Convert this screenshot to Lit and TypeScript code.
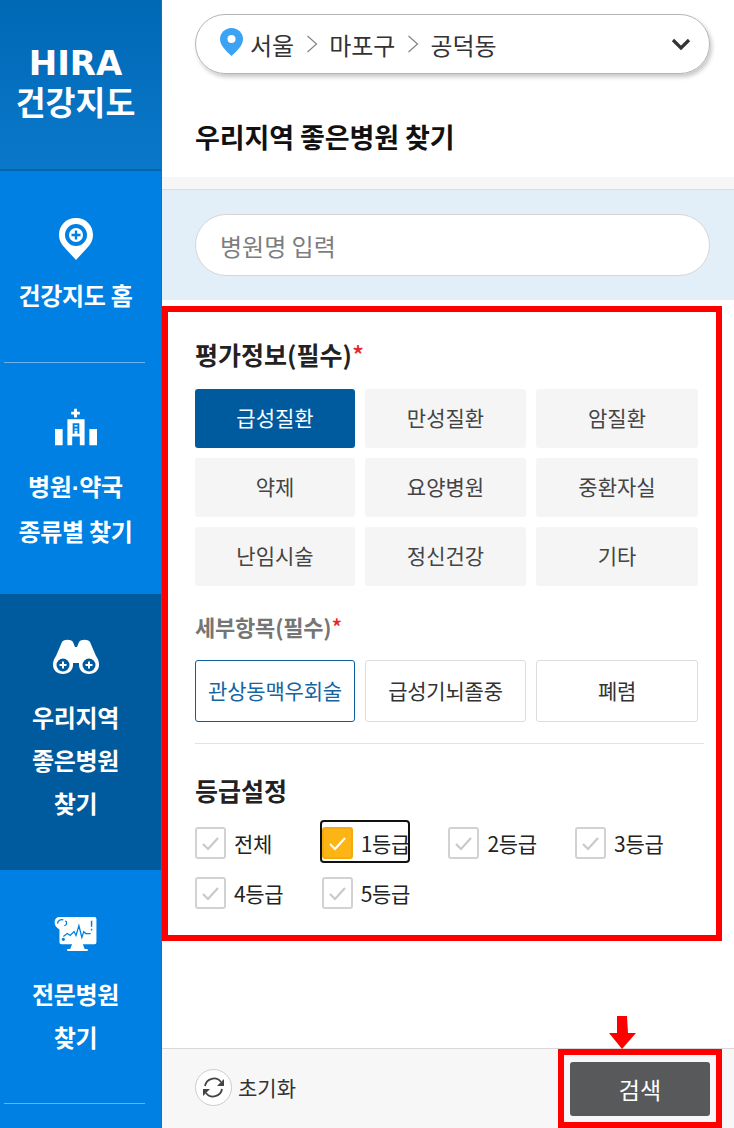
import {css, html, LitElement} from 'lit';
import {customElement} from 'lit/decorators.js';

const CHIPS = ['급성질환', '만성질환', '암질환', '약제', '요양병원', '중환자실', '난임시술', '정신건강', '기타'];
const SUBS = ['관상동맥우회술', '급성기뇌졸중', '폐렴'];
const GRADES = ['전체', '1등급', '2등급', '3등급', '4등급', '5등급'];

const homeIcon = html`<svg width="36" height="44" viewBox="0 0 36 44">
  <path fill="#fff" d="M18 1C8 1 1 8.500 1 18c0 5 2 9 5.500 12.500L18 43l11.500-12.500C33 27 35 23 35 18 35 8.500 28 1 18 1z"/>
  <circle cx="18" cy="18" r="11" fill="#0080e2"/>
  <circle cx="18" cy="18" r="7" fill="#fff"/>
  <path stroke="#0080e2" stroke-width="2.400" d="M18 13.500v9M13.500 18h9"/>
</svg>`;

const hospitalIcon = html`<svg width="42" height="38" viewBox="0 0 44 38" fill="#fff">
  <path d="M20 0h3v3h3v3h-3v3h-3V6h-3V3h3z"/>
  <path d="M13 11h18v27h-5V29h-8v9h-5z"/>
  <path d="M0 21h8v17H0zM36 21h8v17h-8z"/>
  <path fill="#0080e2" d="M18.500 15h7v11h-2v-3h-3v3h-2zm2 2v1.500h3V17zm0 3.500V22h3v-1.500z"/>
</svg>`;

const binocularIcon = html`<svg width="46" height="36" viewBox="0 0 46 36">
  <path fill="#fff" d="M9 3c2-3 9-3 11 0l2 5h2l2-5c2-3 9-3 11 0l6 14c2 3 3 5 3 9 0 5-4 9-10 9s-10-4-10-9v-2h-6v2c0 5-4 9-10 9S0 31 0 26c0-4 1-6 3-9z"/>
  <circle cx="10" cy="26" r="6.500" fill="#005a9e"/>
  <circle cx="36" cy="26" r="6.500" fill="#005a9e"/>
  <path stroke="#fff" stroke-width="2" d="M10 22.500v7M6.500 26h7M36 22.500v7M32.500 26h7"/>
</svg>`;

const monitorIcon = html`<svg width="44" height="36" viewBox="0 0 44 37">
  <path fill="#fff" d="M5 1h36a2 2 0 0 1 2 2v24a2 2 0 0 1-2 2H29l2 5h3v2H13v-2h3l2-5H7a2 2 0 0 1-2-2V14C2 12 0 10 0 6.500 0 3 2 1 5 1z"/>
  <path fill="none" stroke="#0080e2" stroke-width="1.300" d="M9 21l4-3 3 2 4-4 2 4 3-10 3 12 2-6 2 2h5"/>
  <path fill="none" stroke="#0080e2" stroke-width="1.300" d="M3 8c0-3 3-5 6-4M11 5c2 1 2 4-1 5"/>
  <circle cx="9" cy="24" r="1.600" fill="#0080e2"/>
  <path stroke="#0080e2" stroke-width="1.500" d="M38 5v6M38 13v2"/>
</svg>`;

const checkMark = html`<svg class="tick" width="19" height="15" viewBox="0 0 19 15">
  <path fill="none" stroke="currentColor" stroke-width="2.200" d="M2 8l5 5L17 2"/>
</svg>`;

@customElement('app-root')
export class AppRoot extends LitElement {
  static override styles = css`
    :host {
      display: flex;
      width: 734px;
      height: 1128px;
      overflow: hidden;
      position: relative;
      font-family: 'Noto Sans CJK KR', 'Noto Sans', sans-serif;
      color: #222;
      background: #fff;
    }

    .side {
      width: 162px;
      flex: none;
      display: flex;
      flex-direction: column;
      background: #0080e2;
      color: #fff;
      border-right: 1px solid #1a6fb5;
      box-sizing: border-box;
    }

    .logo {
      height: 171px;
      flex: none;
      box-sizing: border-box;
      background: linear-gradient(#0068b5, #0a78ca);
      border-bottom: 2px solid #0865ad;
      display: flex;
      flex-direction: column;
      align-items: center;
      padding: 46px 10px 0 0;
    }

    .logo b {
      font-family: 'DejaVu Sans', sans-serif;
      font-size: 34px;
      line-height: 34px;
      font-weight: 700;
    }

    .logo span {
      font-size: 32.500px;
      line-height: 42px;
      font-weight: 700;
    }

    .nav {
      display: flex;
      flex-direction: column;
      align-items: center;
      box-sizing: border-box;
      padding-right: 10px;
      font-size: 24px;
      font-weight: 700;
      line-height: 43px;
      letter-spacing: -0.3px;
    }

    .nav svg {
      display: block;
      flex: none;
    }

    .nav em {
      font-family: 'Liberation Sans', sans-serif;
      font-style: normal;
      font-weight: 700;
    }

    .home { height: 191px; padding-top: 46px; }
    .home svg { margin-bottom: 12px; }
    .hospital { height: 231px; padding-top: 45px; }
    .hospital svg { margin-bottom: 18px; }
    .active { height: 276px; padding-top: 45px; background: #005a9e; }
    .active svg { margin-bottom: 20px; }
    .special { height: 233px; padding-top: 46px; }
    .special svg { margin-bottom: 20px; }

    .rule {
      height: 1px;
      flex: none;
      margin: 0 16px 0 4px;
      background: #6db2ea;
    }

    .main {
      flex: 1;
      min-width: 0;
      display: flex;
      flex-direction: column;
    }

    .loc-wrap {
      height: 177px;
      flex: none;
      padding: 14px 24px 0 33px;
      box-sizing: border-box;
    }

    .loc {
      height: 60px;
      box-sizing: border-box;
      border: 1px solid #b5b5b5;
      border-radius: 30px;
      box-shadow: 2px 3px 4px rgba(0, 0, 0, 0.22);
      display: flex;
      align-items: center;
      padding: 0 18px 0 24px;
      font-size: 24px;
      color: #333;
    }

    .loc .pin { margin-right: 7px; margin-top: -4px; }
    .loc .sep { margin: 0 11px 0 12px; }
    .loc .chev { margin-left: auto; }

    h1 {
      margin: 39px 0 0;
      font-size: 27px;
      line-height: 48px;
      font-weight: 700;
      color: #111;
      letter-spacing: -0.1px;
    }

    .band {
      height: 13px;
      flex: none;
      background: #f6f6f6;
      border-bottom: 1px solid #ddd;
      box-sizing: border-box;
    }

    .search-band {
      height: 110px;
      flex: none;
      background: #e2eff9;
      padding: 24px 24px 0 33px;
      box-sizing: border-box;
    }

    .name-input {
      height: 62px;
      box-sizing: border-box;
      background: #fff;
      border: 1px solid #d6d6d6;
      border-radius: 31px;
      display: flex;
      align-items: center;
      padding-left: 24px;
      font-size: 24px;
      color: #7d7d7d;
    }

    .filters {
      width: 560px;
      height: 635px;
      flex: none;
      margin-top: 6px;
      box-sizing: border-box;
      border: 6px solid #fe0000;
      padding: 24px 18px 0 27px;
    }

    .sec-title {
      font-size: 25px;
      line-height: 36px;
      font-weight: 700;
      color: #222;
    }

    .sec-title i, .sub-title i { font-style: normal; color: #e8262a; font-weight: 500; }

    .grid {
      display: grid;
      grid-template-columns: 160px 161px 162px;
      gap: 10px;
      margin-top: 17px;
    }

    .chip {
      height: 59px;
      box-sizing: border-box;
      padding-bottom: 4px;
      border-radius: 3px;
      background: #f5f5f5;
      display: flex;
      align-items: center;
      justify-content: center;
      font-size: 21px;
      color: #444;
    }

    .chip.on { background: #005a9e; color: #fff; }

    .sub-title {
      margin-top: 21px;
      font-size: 22px;
      line-height: 38px;
      font-weight: 700;
      color: #757575;
      letter-spacing: -0.2px;
    }

    .grid.subs { margin-top: 15px; }

    .sub {
      height: 62px;
      box-sizing: border-box;
      padding-bottom: 2px;
      border: 1px solid #ddd;
      border-radius: 3px;
      display: flex;
      align-items: center;
      justify-content: center;
      font-size: 21px;
      color: #333;
      letter-spacing: -0.2px;
    }

    .sub.on { border: 1.500px solid #0f5f9f; color: #1565a3; }

    .divider {
      height: 1px;
      margin-top: 21px;
      width: 509px;
      background: #e2e2e2;
    }

    .grade-title { margin-top: 28px; }

    .grades {
      display: grid;
      grid-template-columns: repeat(4, 126.7px);
      row-gap: 18px;
      margin-top: 19px;
    }

    .grade {
      display: flex;
      align-items: center;
      gap: 8px;
      height: 32px;
      font-size: 21px;
      color: #222;
      letter-spacing: -0.3px;
      white-space: nowrap;
    }

    .box {
      width: 31px;
      height: 32px;
      flex: none;
      box-sizing: border-box;
      border: 2px solid #d2d2d2;
      border-radius: 3px;
      display: flex;
      align-items: center;
      justify-content: center;
      color: #c9c9c9;
    }

    .grade.on { position: relative; }
    .grade.on .box { background: #fdb515; border-color: #f2ac10; color: #fff; }

    .grade.on::before {
      content: '';
      position: absolute;
      left: -2px;
      top: -7px;
      width: 90px;
      height: 43px;
      box-sizing: border-box;
      border: 2px solid #111;
      border-radius: 4px;
    }

    .foot {
      margin-top: 107px;
      height: 80px;
      flex: none;
      box-sizing: border-box;
      border-top: 1px solid #d8d8d8;
      background: #f7f7f7;
      display: flex;
      padding-left: 33px;
    }

    .reset {
      display: flex;
      align-items: center;
      gap: 6px;
      font-size: 21px;
      color: #333;
      height: 76px;
    }

    .reset-ring {
      width: 37px;
      height: 37px;
      box-sizing: border-box;
      border: 1px solid #ccc;
      border-radius: 50%;
      background: #fff;
      display: flex;
      align-items: center;
      justify-content: center;
    }

    .go {
      margin-left: auto;
      margin-right: 12px;
      width: 164px;
      height: 79px;
      box-sizing: border-box;
      border: 6px solid #fe0000;
      padding: 7px 6px 0;
    }

    .go div {
      height: 54px;
      border-radius: 3px;
      background: #58595b;
      color: #fff;
      font-size: 23px;
      display: flex;
      align-items: center;
      justify-content: center;
    }

    .arrow {
      position: absolute;
      left: 609px;
      top: 1016px;
    }
  `;

  override render() {
    return html`
      <aside class="side">
        <div class="logo"><b>HIRA</b><span>건강지도</span></div>
        <div class="nav home">${homeIcon}<span>건강지도 홈</span></div>
        <div class="rule"></div>
        <div class="nav hospital">${hospitalIcon}<span>병원<em>·</em>약국</span><span>종류별 찾기</span></div>
        <div class="nav active">${binocularIcon}<span>우리지역</span><span>좋은병원</span><span>찾기</span></div>
        <div class="nav special">${monitorIcon}<span>전문병원</span><span>찾기</span></div>
        <div class="rule"></div>
      </aside>
      <main class="main">
        <div class="loc-wrap">
          <div class="loc">
            <svg class="pin" width="23" height="28" viewBox="0 0 23 28">
              <path fill="#3ba2f4" d="M11.500 0C5 0 0 5 0 11c0 6 5 11 11.500 17C18 22 23 17 23 11 23 5 18 0 11.500 0z"/>
              <circle cx="11.500" cy="11" r="4" fill="#fff"/>
            </svg>
            <span>서울</span>
            <svg class="sep" width="12" height="20" viewBox="0 0 12 20"><path fill="none" stroke="#888" stroke-width="1.300" d="M1.500 2l9 8-9 8"/></svg>
            <span>마포구</span>
            <svg class="sep" width="12" height="20" viewBox="0 0 12 20"><path fill="none" stroke="#888" stroke-width="1.300" d="M1.500 2l9 8-9 8"/></svg>
            <span>공덕동</span>
            <svg class="chev" width="20" height="14" viewBox="0 0 20 14"><path fill="none" stroke="#333" stroke-width="3.200" d="M2 3l8 8 8-8"/></svg>
          </div>
          <h1>우리지역 좋은병원 찾기</h1>
        </div>
        <div class="band"></div>
        <div class="search-band"><div class="name-input">병원명 입력</div></div>
        <section class="filters">
          <div class="sec-title">평가정보(필수)<i>*</i></div>
          <div class="grid">
            ${CHIPS.map((c, i) => html`<div class="chip ${i === 0 ? 'on' : ''}">${c}</div>`)}
          </div>
          <div class="sub-title">세부항목(필수)<i>*</i></div>
          <div class="grid subs">
            ${SUBS.map((c, i) => html`<div class="sub ${i === 0 ? 'on' : ''}">${c}</div>`)}
          </div>
          <div class="divider"></div>
          <div class="sec-title grade-title">등급설정</div>
          <div class="grades">
            ${GRADES.map((g, i) => html`<div class="grade ${i === 1 ? 'on' : ''}"><span class="box">${checkMark}</span>${g}</div>`)}
          </div>
        </section>
        <div class="foot">
          <div class="reset">
            <span class="reset-ring">
              <svg width="25" height="25" viewBox="0 0 25 25" fill="none" stroke="#444" stroke-width="1.800">
                <path d="M4 11a9 9 0 0 1 16-4"/><path fill="#444" stroke="none" d="M23 4v7h-7z"/>
                <path d="M21 14a9 9 0 0 1-16 4"/><path fill="#444" stroke="none" d="M2 21v-7h7z"/>
              </svg>
            </span>
            초기화
          </div>
          <div class="go"><div>검색</div></div>
        </div>
      </main>
      <svg class="arrow" width="27" height="33" viewBox="0 0 27 33"><path fill="#fe0000" d="M8 0h10l1 17h8L13 33 0 17h8z"/></svg>
    `;
  }
}

declare global {
  interface HTMLElementTagNameMap {
    'app-root': AppRoot;
  }
}
